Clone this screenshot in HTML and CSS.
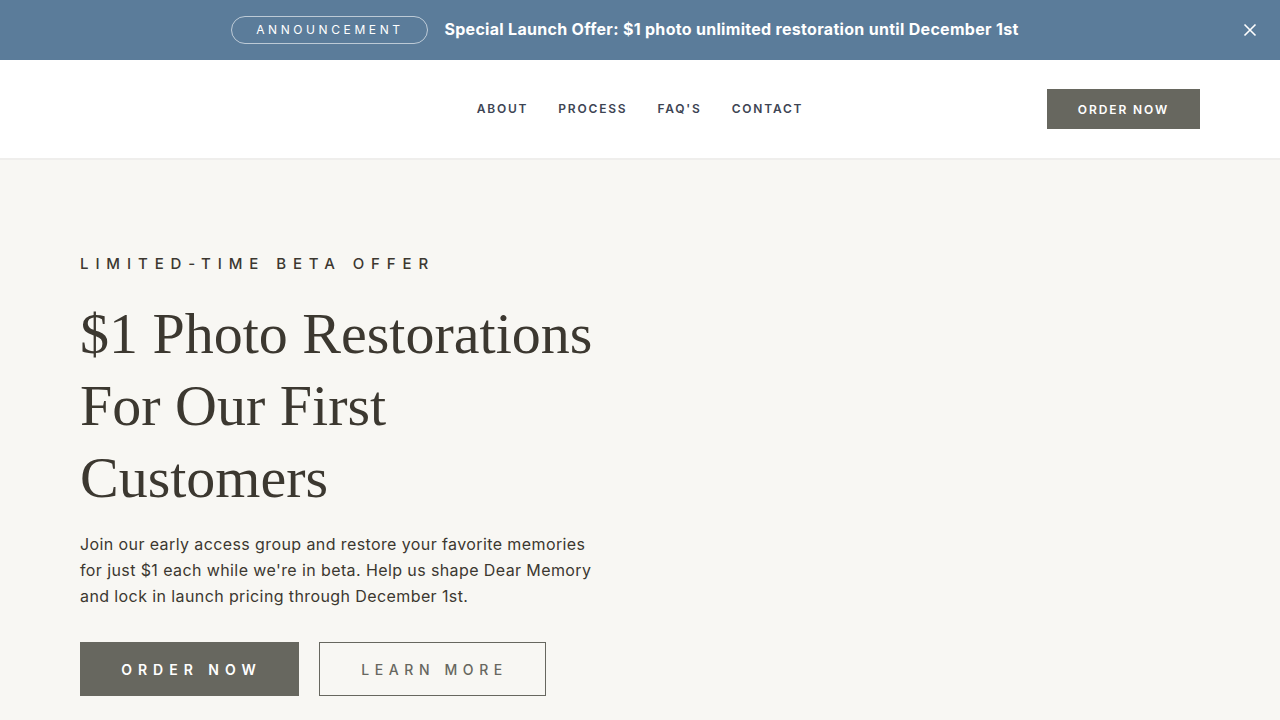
FILE: index.html
```html
<!DOCTYPE html>
<html lang="en">
<head>
<meta charset="utf-8">
<title>Dear Memory</title>
<link rel="stylesheet" href="styles.css">
</head>
<body>
<div class="announce">
  <div class="announce-inner">
    <span class="pill">ANNOUNCEMENT</span>
    <span class="announce-text">Special Launch Offer: $1 photo unlimited restoration until December 1st</span>
  </div>
  <button class="close" aria-label="Close">
    <svg width="14" height="14" viewBox="0 0 14 14"><path d="M1.5 1.5 L12.5 12.5 M12.5 1.5 L1.5 12.5" stroke="#fff" stroke-width="1.6" fill="none"/></svg>
  </button>
</div>
<header class="header">
  <div class="logo-space"></div>
  <nav class="nav">
    <a href="#">ABOUT</a>
    <a href="#">PROCESS</a>
    <a href="#">FAQ'S</a>
    <a href="#">CONTACT</a>
  </nav>
  <a class="btn-header" href="#">ORDER NOW</a>
</header>
<main class="hero">
  <div class="hero-content">
    <p class="eyebrow">LIMITED-TIME BETA OFFER</p>
    <h1 class="title">$1 Photo Restorations For Our First Customers</h1>
    <p class="lead">Join our early access group and restore your favorite memories for just $1 each while we're in beta. Help us shape Dear Memory and lock in launch pricing through December 1st.</p>
    <div class="actions">
      <a class="btn btn-solid" href="#">ORDER NOW</a>
      <a class="btn btn-outline" href="#">LEARN MORE</a>
    </div>
  </div>
</main>
</body>
</html>
```
FILE: styles.css
```css
* { box-sizing: border-box; }
html, body { margin: 0; padding: 0; }
body {
  font-family: "Inter", "Open Sans", sans-serif;
  background: #f8f7f3;
  color: #3c3830;
  height: 720px;
  overflow: hidden;
}
a { text-decoration: none; }

.announce {
  height: 60px;
  background: #5b7c9a;
  display: flex;
  align-items: center;
  justify-content: center;
  padding-right: 30px;
  position: relative;
}
.announce-inner {
  display: flex;
  align-items: center;
  gap: 16px;
}
.pill {
  display: inline-flex;
  align-items: center;
  justify-content: center;
  width: 197px;
  height: 28px;
  border: 1px solid rgba(255,255,255,0.6);
  border-radius: 14px;
  color: #fff;
  font-size: 12px;
  letter-spacing: 3.6px;
  font-weight: 400;
  padding-bottom: 1px;
}
.announce-text {
  color: #fff;
  font-size: 16px;
  font-weight: 700;
  letter-spacing: 0.3px;
  margin-top: -2px;
}
.close {
  position: absolute;
  right: 23px;
  top: 23px;
  background: none;
  border: 0;
  padding: 0;
  width: 14px;
  height: 14px;
  display: flex;
}

.header {
  height: 100px;
  background: #fff;
  border-bottom: 2px solid #efeeec;
  display: flex;
  align-items: center;
  justify-content: space-between;
  padding: 0 80px 0;
}
.logo-space { width: 153px; }
.nav {
  display: flex;
  gap: 30px;
  margin-bottom: 2px;
}
.nav a {
  color: #3d4453;
  font-size: 12px;
  font-weight: 600;
  letter-spacing: 1.8px;
}
.btn-header {
  width: 153px;
  height: 40px;
  background: #67675f;
  color: #fff;
  display: flex;
  align-items: center;
  justify-content: center;
  font-size: 12px;
  font-weight: 600;
  letter-spacing: 1.9px;
}

.hero {
  padding: 93px 80px 0;
}
.hero-content { width: 540px; }
.eyebrow {
  margin: 0;
  font-size: 15px;
  font-weight: 500;
  letter-spacing: 6.9px;
  line-height: 22px;
}
.title {
  margin: 23px 0 0;
  font-family: "Liberation Serif", "Times New Roman", serif;
  font-weight: 400;
  font-size: 58px;
  line-height: 72px;
  color: #3c3830;
}
.lead {
  margin: 17px 0 0;
  font-size: 16px;
  line-height: 26px;
  letter-spacing: 0.4px;
  width: 525px;
}
.actions {
  display: flex;
  gap: 20px;
  margin-top: 33px;
}
.btn {
  height: 54px;
  display: flex;
  align-items: center;
  justify-content: center;
  font-size: 14px;
  font-weight: 600;
}
.btn-solid {
  width: 219px;
  background: #67675f;
  color: #fff;
  letter-spacing: 6px;
  padding-left: 4px;
}
.btn-outline {
  width: 227px;
  border: 1px solid #67675f;
  color: #67675f;
  letter-spacing: 5.6px;
  font-weight: 500;
  padding-left: 4px;
}
```
